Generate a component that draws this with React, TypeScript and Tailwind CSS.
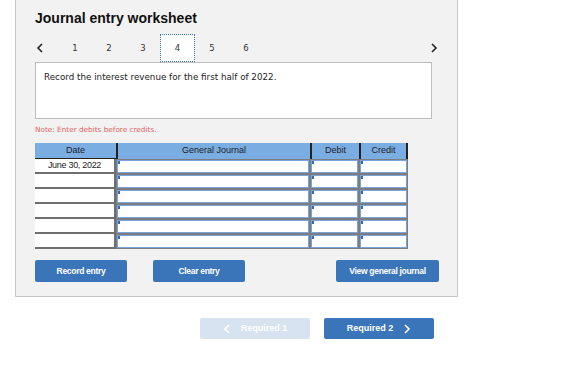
import React from "react"

const navNums = [1, 2, 3, 4, 5, 6]
const rows = ["June 30, 2022", "", "", "", "", ""]

function Chevron({ dir, className }: { dir: "left" | "right"; className?: string }) {
  return (
    <svg width="8" height="10" viewBox="0 0 8 10" className={className}>
      {dir === "left" ? (
        <polyline points="6,1 2,5 6,9" fill="none" stroke="currentColor" strokeWidth="1.6" />
      ) : (
        <polyline points="2,1 6,5 2,9" fill="none" stroke="currentColor" strokeWidth="1.6" />
      )}
    </svg>
  )
}

function InputCell() {
  return (
    <div className="h-[15px] border border-[#7d7d7d] bg-white">
      <div className="relative h-full border border-[#79a3dc]">
        <span className="absolute left-0 top-0 h-[3px] w-[2px] bg-[#2f6cc0]" />
      </div>
    </div>
  )
}

export default function App() {
  return (
    <div className="h-[392px] w-[577px] bg-white font-['DejaVu_Sans',sans-serif] text-[#222]">
      {/* worksheet panel */}
      <div className="ml-[15px] h-[297px] w-[443px] border-x border-b border-[#c6c6c6] bg-[#f2f2f2] pl-[19px] pt-[9px]">
        <h1 className="h-[18px] font-['Liberation_Sans',sans-serif] text-[14px] font-bold leading-[18px] text-[#111]">
          Journal entry worksheet
        </h1>

        {/* step tabs */}
        <div className="mt-[7px] flex h-[28px] w-[403px] items-center">
          <div className="flex w-[23px] items-center pl-[1px] text-[#222]">
            <Chevron dir="left" />
          </div>
          {navNums.map((n) =>
            n === 4 ? (
              <div
                key={n}
                className="flex h-[28px] w-[35px] items-center justify-center border border-dotted border-[#3a75ba] bg-white text-[8.5px] text-[#333]"
              >
                {n}
              </div>
            ) : (
              <div key={n} className="flex h-[28px] w-[34px] items-center justify-center text-[8.5px] text-[#333]">
                {n}
              </div>
            )
          )}
          <div className="ml-auto flex items-center text-[#222]">
            <Chevron dir="right" />
          </div>
        </div>

        {/* prompt */}
        <div className="h-[57px] w-[397px] border border-[#bdbdbd] bg-white px-[8px] pt-[8px] text-[8.75px] leading-[12px] text-[#222]">
          Record the interest revenue for the first half of 2022.
        </div>

        <p className="mt-[6px] text-[7.3px] leading-[10px] text-[#e06666]">Note: Enter debits before credits.</p>

        {/* journal table */}
        <div className="mt-[8px] w-[373px] font-['Liberation_Sans',sans-serif] text-[9px]">
          <div className="grid h-[16px] grid-cols-[81px_194px_49px_49px] bg-[#7aade2] leading-[15px] text-[#1e1e1e]">
            <div className="border-b-2 border-[#222] text-center">Date</div>
            <div className="border-l-2 border-[#222] text-center">General Journal</div>
            <div className="border-l-2 border-[#222] text-center">Debit</div>
            <div className="border-x-2 border-[#222] text-center">Credit</div>
          </div>
          {rows.map((d, i) => (
            <div key={i} className="grid grid-cols-[81px_194px_49px_49px]">
              <div className="h-[15px] border-b-2 border-r-2 border-[#6f6f6f] bg-white text-center text-[9px] leading-[13px] tracking-[-0.3px] text-[#222]">
                {d}
              </div>
              <InputCell />
              <InputCell />
              <InputCell />
            </div>
          ))}
        </div>

        {/* actions */}
        <div className="mt-[11px] flex h-[22px] w-[404px] font-['Liberation_Sans',sans-serif] text-[8.5px] font-bold tracking-[-0.3px] text-white">
          <button className="h-[22px] w-[92px] rounded-[2px] bg-[#3a75ba]">Record entry</button>
          <button className="ml-[26px] h-[22px] w-[92px] rounded-[2px] bg-[#3a75ba]">Clear entry</button>
          <button className="ml-auto h-[22px] w-[103px] rounded-[2px] bg-[#3a75ba]">View general journal</button>
        </div>
      </div>

      {/* requirement navigation */}
      <div className="mt-[21px] flex gap-[14px] pl-[200px] font-['Liberation_Sans',sans-serif] text-[9px] font-bold text-white">
        <button className="flex h-[21px] w-[110px] items-center justify-center gap-[10px] rounded-[2px] bg-[#d7e3f1]">
          <Chevron dir="left" />
          <span>Required 1</span>
        </button>
        <button className="flex h-[21px] w-[110px] items-center justify-center gap-[10px] rounded-[2px] bg-[#3a75ba]">
          <span>Required 2</span>
          <Chevron dir="right" />
        </button>
      </div>
    </div>
  )
}
